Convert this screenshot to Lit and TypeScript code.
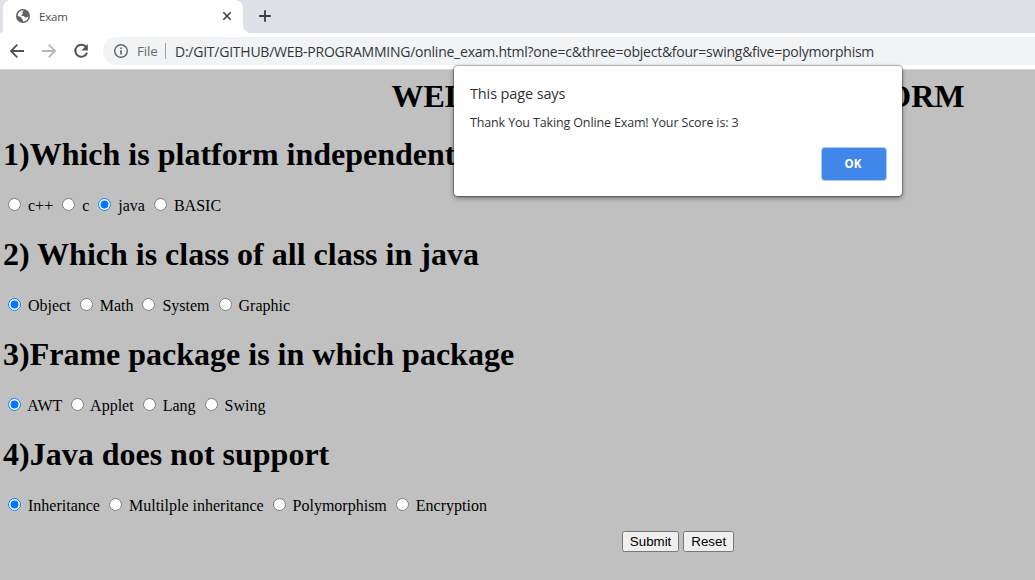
import { LitElement, html, css } from "lit";
import { customElement } from "lit/decorators.js";

interface Question {
  name: string;
  title: string;
  options: string[];
  selected: number;
}

const questions: Question[] = [
  { name: "one", title: "1)Which is platform independent", options: ["c++", "c", "java", "BASIC"], selected: 2 },
  { name: "two", title: "2) Which is class of all class in java", options: ["Object", "Math", "System", "Graphic"], selected: 0 },
  { name: "three", title: "3)Frame package is in which package", options: ["AWT", "Applet", "Lang", "Swing"], selected: 0 },
  { name: "four", title: "4)Java does not support", options: ["Inheritance", "Multilple inheritance", "Polymorphism", "Encryption"], selected: 0 },
];

@customElement("browser-chrome")
class BrowserChrome extends LitElement {
  static styles = css`
    :host { display: block; font-family: "Open Sans", "Noto Sans", sans-serif; color: #4a4d51; }
    svg { display: block; flex: none; }
    .tabs { display: flex; height: 33px; background: #dee1e6; }
    .lead { background: #fff; }
    .edge { width: 3px; height: 100%; background: #dee1e6; border-bottom-right-radius: 3px; }
    .tab { display: flex; align-items: center; box-sizing: border-box; width: 240px; padding: 0 9px 1px 12px; background: #fff; border-radius: 8px 8px 0 0; }
    .name { flex: 1; margin-left: 8px; font-size: 11.5px; letter-spacing: -0.2px; }
    .corner { align-self: flex-end; width: 8px; height: 8px; background: radial-gradient(circle at 100% 0, #dee1e6 7.5px, #fff 8.5px); }
    .plus { margin: 9px 0 0 7px; }
    .bar { display: flex; align-items: center; box-sizing: border-box; height: 37px; padding-left: 8px; background: #fff; border-bottom: 1px solid #d3d4d6; }
    .fwd { margin-left: 14px; }
    .reload { margin-left: 14px; }
    .address { display: flex; align-items: center; flex: 1; height: 28px; margin-left: 13px; padding-left: 10px; background: #f1f3f4; border-radius: 14px 0 0 14px; font-size: 14px; white-space: nowrap; }
    .file { width: 28px; margin-left: 8px; color: #6a6e73; font-size: 13.5px; letter-spacing: -0.15px; }
    .sep { width: 1px; height: 16px; margin: 0 9px 0 0; background: #9aa0a6; }
    .url { color: #33363a; letter-spacing: -0.24px; }
  `;
  render() {
    return html`
      <div class="tabs">
        <div class="lead"><div class="edge"></div></div>
        <div class="tab">
          <svg width="16" height="16" viewBox="0 0 16 16">
            <circle cx="8" cy="8" r="7" fill="#5f6368" />
            <path d="M9 2.5C7.5 3.2 7.2 4.2 7.7 5.2 8.2 6.3 6.6 6.4 6.2 7.1 5.9 8 7.4 8 8.6 8.1 9.5 8.3 9.4 9.4 10.4 9.6 11.4 9.7 12.5 9 13.4 8.6A5.5 5.5 0 0 1 8 13.5V12.2C8 11.3 6.8 11.4 6.6 10.3 6.4 9.4 5.4 8.6 2.6 8A5.5 5.5 0 0 1 9 2.5Z" fill="#fff" />
          </svg>
          <span class="name">Exam</span>
          <svg width="14" height="14" viewBox="0 0 14 14" stroke="#3c4043" stroke-width="1.6"><path d="M3.3 3.3l7.4 7.4M10.7 3.3l-7.4 7.4" /></svg>
        </div>
        <div class="corner"></div>
        <svg class="plus" width="14" height="14" viewBox="0 0 14 14" stroke="#3c4043" stroke-width="1.8"><path d="M7 1.2v11.6M1.2 7h11.6" /></svg>
      </div>
      <div class="bar">
        <svg width="18" height="18" viewBox="0 0 18 18" fill="none" stroke="#4f5357" stroke-width="1.8"><path d="M16 9H3M9.3 2.7L3 9l6.3 6.3" /></svg>
        <svg class="fwd" width="18" height="18" viewBox="0 0 18 18" fill="none" stroke="#b5b7b9" stroke-width="1.8"><path d="M2 9h13M8.7 2.7L15 9l-6.3 6.3" /></svg>
        <svg class="reload" width="18" height="18" viewBox="0 0 18 18"><path d="M14.2 5.2A6 6 0 1 0 15 10.7" fill="none" stroke="#4f5357" stroke-width="2" /><path d="M15.8 2v6.4H9.4Z" fill="#4f5357" /></svg>
        <div class="address">
          <svg width="16" height="16" viewBox="0 0 16 16"><circle cx="8" cy="8" r="6.3" fill="none" stroke="#5f6368" stroke-width="1.4" /><path d="M7.2 7.2h1.6v4.2H7.2zM7.2 4.5h1.6V6H7.2z" fill="#5f6368" /></svg>
          <span class="file">File</span>
          <span class="sep"></span>
          <span class="url">D:/GIT/GITHUB/WEB-PROGRAMMING/online_exam.html?one=c&amp;three=object&amp;four=swing&amp;five=polymorphism</span>
        </div>
      </div>
    `;
  }
}

@customElement("exam-form")
class ExamForm extends LitElement {
  static styles = css`
    :host { display: block; box-sizing: border-box; height: 510px; padding-left: 3px; background: #c0c0c0; color: #000; font: 16px "Liberation Serif", serif; overflow: hidden; }
    h1 { margin: 0; height: 37px; line-height: 37px; font-size: 32px; white-space: nowrap; }
    .title { width: 1350px; margin: 8px 0 21px; text-align: center; }
    .options { height: 21px; margin: 22px 0 20px; white-space: nowrap; }
    .actions { width: 1350px; margin-top: -5px; text-align: center; }
    button { font: 13.333px "Liberation Sans", sans-serif; }
  `;
  render() {
    return html`
      <h1 class="title">WELCOME TO ONLINE EXAM FORM</h1>
      ${questions.map(
        (q) => html`<h1>${q.title}</h1>
          <div class="options">${q.options.map((o, i) => html`<input type="radio" name=${q.name} .checked=${i === q.selected} /> ${o} `)}</div>`
      )}
      <div class="actions"><button>Submit</button> <button>Reset</button></div>
    `;
  }
}

@customElement("alert-dialog")
class AlertDialog extends LitElement {
  static styles = css`
    :host { display: flex; flex-direction: column; box-sizing: border-box; width: 448px; height: 130px; padding: 17px 16px 16px; background: #fff; border-radius: 4px; box-shadow: 0 0 1px 1px rgba(0, 0, 0, 0.28), 0 2px 5px rgba(0, 0, 0, 0.45); font-family: "Open Sans", "Noto Sans", sans-serif; color: #303336; white-space: nowrap; }
    .heading { height: 22px; line-height: 22px; font-size: 14.5px; letter-spacing: -0.13px; }
    .message { margin-top: 8px; height: 20px; line-height: 20px; font-size: 12.5px; letter-spacing: -0.14px; }
    .ok { align-self: flex-end; width: 64px; height: 32px; margin-top: 15px; padding: 0 2px 1px 0; border: 0; border-radius: 3px; background: #4187ea; box-shadow: 0 0 0 1px #a9caf7; color: #fff; font: bold 11.5px "Open Sans", sans-serif; }
  `;
  render() {
    return html`
      <div class="heading">This page says</div>
      <div class="message">Thank You Taking Online Exam! Your Score is: 3</div>
      <button class="ok">OK</button>
    `;
  }
}

@customElement("app-root")
class AppRoot extends LitElement {
  static styles = css`
    :host { display: block; position: relative; width: 1035px; height: 580px; overflow: hidden; }
    .dialog { position: absolute; left: 454px; top: 66px; }
  `;
  render() {
    return html`
      <browser-chrome></browser-chrome>
      <exam-form></exam-form>
      <alert-dialog class="dialog"></alert-dialog>
    `;
  }
}
